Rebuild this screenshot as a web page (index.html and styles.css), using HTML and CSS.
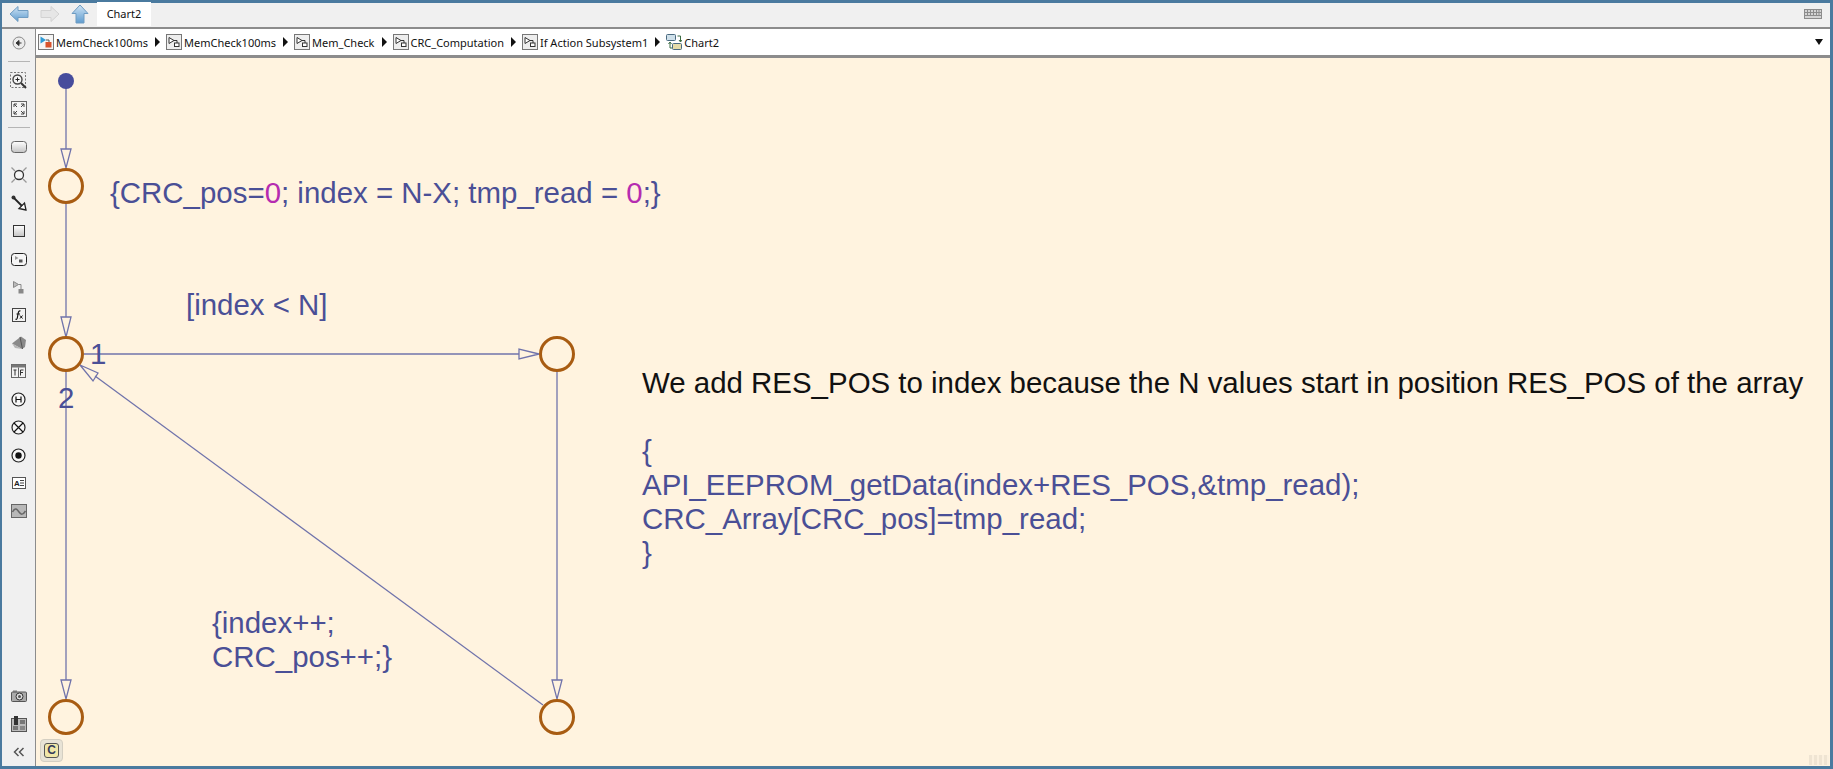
FILE: index.html
```html
<!DOCTYPE html>
<html lang="en">

<head>
  <meta charset="UTF-8">
  <meta name="viewport" content="width=device-width, initial-scale=1.0">
  <title>Chart2</title>
  <link rel="stylesheet" href="styles.css">
</head>

<body>
  <svg class="defs" width="0" height="0">
    <defs>
      <linearGradient id="navblue" x1="0" y1="0" x2="0" y2="1">
        <stop offset="0" stop-color="#cfe4f5"/>
        <stop offset="1" stop-color="#5f9ccf"/>
      </linearGradient>
      <linearGradient id="boxgrey" x1="0" y1="0" x2="0" y2="1">
        <stop offset="0" stop-color="#ffffff"/>
        <stop offset="1" stop-color="#c4c4c4"/>
      </linearGradient>
      <symbol id="subsystem" viewBox="0 0 16 16">
        <rect x="0.5" y="0.5" width="15" height="15" fill="#eeeeee" stroke="#777"/>
        <path d="M3 3.5 L8 6.5 L3 9.5 Z" fill="#fff" stroke="#333"/>
        <path d="M8 6.5 H11 V9" fill="none" stroke="#333"/>
        <rect x="8.5" y="9" width="4.5" height="3.5" fill="#fff" stroke="#333"/>
      </symbol>
    </defs>
  </svg>

  <div class="window">
    <div class="tabbar">
      <div class="nav">
        <svg class="nav-icon" width="20" height="18" viewBox="0 0 20 18"><path d="M1 9 L9 1.5 V5.5 H19 V12.5 H9 V16.5 Z" fill="url(#navblue)" stroke="#6f9cc2"/></svg>
        <svg class="nav-icon" width="20" height="18" viewBox="0 0 20 18"><path d="M19 9 L11 1.5 V5.5 H1 V12.5 H11 V16.5 Z" fill="#e6e6e6" stroke="#d2d2d2"/></svg>
        <svg class="nav-icon" width="18" height="20" viewBox="0 0 18 20"><path d="M9 1 L17 9.5 H13 V19 H5 V9.5 H1 Z" fill="url(#navblue)" stroke="#6f9cc2"/></svg>
      </div>
      <div class="tab">Chart2</div>
      <svg class="keyboard" width="18" height="10" viewBox="0 0 18 10"><rect x="0.5" y="0.5" width="17" height="9" fill="#d4d4d4" stroke="#8c8c8c"/><path d="M3.5 1V6.5M6.5 1V6.5M9.5 1V6.5M12.5 1V6.5M15 1V6.5M1 3.5H17M1 6.5H17" stroke="#8c8c8c"/></svg>
    </div>

    <div class="main">
      <div class="toolbar">
        <div class="tool"><svg width="16" height="16" viewBox="0 0 16 16"><circle cx="8" cy="8" r="6" fill="#ececec" stroke="#888"/><path d="M10.5 8H6M8 5.5L5 8L8 10.5Z" fill="#333" stroke="#333"/></svg></div>
        <hr class="tool-sep">
        <div class="tool"><svg width="18" height="18" viewBox="0 0 18 18"><rect x="0.5" y="0.5" width="15" height="15" fill="none" stroke="#777" stroke-dasharray="2 1.5"/><circle cx="7.5" cy="7.5" r="4.5" fill="#f6f6f6" stroke="#444" stroke-width="1.4"/><path d="M5.5 7.5H9.5M7.5 5.5V9.5" stroke="#222"/><path d="M11 11L16 16" stroke="#333" stroke-width="2"/></svg></div>
        <div class="tool"><svg width="16" height="16" viewBox="0 0 16 16"><rect x="0.5" y="0.5" width="15" height="15" fill="#f4f4f4" stroke="#666"/><path d="M3 6V3H6M13 6V3H10M3 10V13H6M13 10V13H10M3 3L6 6M13 3L10 6M3 13L6 10M13 13L10 10" fill="none" stroke="#444"/></svg></div>
        <hr class="tool-sep">
        <div class="tool"><svg width="16" height="12" viewBox="0 0 16 12"><rect x="0.5" y="0.5" width="15" height="11" rx="3" fill="url(#boxgrey)" stroke="#666"/></svg></div>
        <div class="tool"><svg width="16" height="16" viewBox="0 0 16 16"><circle cx="8" cy="8" r="4.5" fill="#f6f6f6" stroke="#333" stroke-width="1.3"/><path d="M0.5 0.5L4 4M15.5 0.5L12 4M0.5 15.5L4 12M15.5 15.5L12 12" stroke="#999" stroke-width="1.3"/></svg></div>
        <div class="tool"><svg width="16" height="16" viewBox="0 0 16 16"><circle cx="2.5" cy="2.5" r="2" fill="#333"/><path d="M3 3L11 11" stroke="#222" stroke-width="1.8"/><path d="M15 15L8 13.5L13.5 8Z" fill="#fff" stroke="#222" stroke-width="1.3"/></svg></div>
        <div class="tool"><svg width="12" height="12" viewBox="0 0 12 12"><rect x="0.5" y="0.5" width="11" height="11" fill="url(#boxgrey)" stroke="#333"/></svg></div>
        <div class="tool"><svg width="16" height="13" viewBox="0 0 16 13"><rect x="0.5" y="0.5" width="15" height="12" rx="3" fill="#f6f6f6" stroke="#222"/><path d="M4 3L7.5 5L4 7Z" fill="#999"/><rect x="8" y="6.5" width="3.5" height="3" fill="#555"/></svg></div>
        <div class="tool"><svg width="11" height="13" viewBox="0 0 11 13"><path d="M0.5 0.5L5.5 3.5L0.5 6.5Z" fill="#bbb" stroke="#888"/><path d="M5.5 3.5H8V8" fill="none" stroke="#888"/><rect x="5.5" y="8" width="5" height="4.5" fill="#888"/></svg></div>
        <div class="tool"><svg width="14" height="14" viewBox="0 0 14 14"><rect x="0.5" y="0.5" width="13" height="13" fill="#f2f2f2" stroke="#444"/><path d="M8.5 3C7 2.5 6.500 3.500 6 6L5.300 10C5 11.500 4.300 11.500 3.500 11M4.500 6H8" fill="none" stroke="#111" stroke-width="1.200"/><path d="M8 7.500L10.500 10.500M10.500 7.500L8 10.500" stroke="#111"/></svg></div>
        <div class="tool"><svg width="16" height="16" viewBox="0 0 16 16"><path d="M1 8.500L10 1.500L15 5L14 12L11 14Z" fill="#8a8a8a"/><path d="M9 2L11.500 14" stroke="#555"/><path d="M1 8.500L4 13L11 14" fill="#b5b5b5"/></svg></div>
        <div class="tool"><svg width="15" height="14" viewBox="0 0 15 14"><rect x="0.500" y="0.500" width="14" height="13" fill="#f2f2f2" stroke="#666"/><rect x="0.500" y="0.500" width="14" height="3" fill="#777"/><path d="M7.500 3.500V13.500" stroke="#666"/><path d="M2.500 6H5.500M4 6V11.500M9.500 6H12.500M9.500 6V11.500M9.500 8.500H12" stroke="#333" fill="none"/></svg></div>
        <div class="tool"><svg width="15" height="15" viewBox="0 0 15 15"><circle cx="7.500" cy="7.500" r="6.500" fill="#f6f6f6" stroke="#222" stroke-width="1.200"/><path d="M5 4.500V10.500M10 4.500V10.500M5 7.500H10" stroke="#111" stroke-width="1.200"/></svg></div>
        <div class="tool"><svg width="15" height="15" viewBox="0 0 15 15"><circle cx="7.500" cy="7.500" r="6.500" fill="#f6f6f6" stroke="#222" stroke-width="1.200"/><path d="M3 3L12 12M12 3L3 12" stroke="#111" stroke-width="1.200"/></svg></div>
        <div class="tool"><svg width="15" height="15" viewBox="0 0 15 15"><circle cx="7.500" cy="7.500" r="6.500" fill="#f6f6f6" stroke="#222" stroke-width="1.200"/><circle cx="7.500" cy="7.500" r="3.200" fill="#111"/></svg></div>
        <div class="tool"><svg width="14" height="12" viewBox="0 0 14 12"><rect x="0.500" y="0.500" width="13" height="11" fill="#fff" stroke="#555"/><text class="tool-letter" x="2" y="8.500">A</text><path d="M8 3.500H12M8 6H12M8 8.500H12" stroke="#444"/></svg></div>
        <div class="tool"><svg width="16" height="14" viewBox="0 0 16 14"><rect x="0.500" y="0.500" width="15" height="13" fill="#b8b8b8" stroke="#666"/><path d="M1.500 8C4 3 6 5 8 8S12 11 14.500 7" fill="none" stroke="#666" stroke-width="1.500"/></svg></div>
        <div class="tool-spacer"></div>
        <div class="tool"><svg width="16" height="12" viewBox="0 0 16 12"><rect x="0.500" y="2" width="15" height="9.500" rx="1" fill="#aaa" stroke="#555"/><rect x="2" y="0.500" width="4" height="2" fill="#777"/><circle cx="8.500" cy="6.500" r="3.500" fill="#ddd" stroke="#333"/><circle cx="8.500" cy="6.500" r="1.500" fill="#555"/></svg></div>
        <div class="tool"><svg width="16" height="16" viewBox="0 0 16 16"><rect x="0.500" y="2.500" width="15" height="13" fill="#bbb" stroke="#555"/><rect x="3" y="0" width="4" height="9" fill="#333"/><rect x="9" y="4" width="5" height="4" fill="#777"/><rect x="2" y="10" width="5" height="4" fill="#777"/><rect x="9" y="10" width="5" height="4" fill="#888"/></svg></div>
        <div class="tool"><svg width="12" height="10" viewBox="0 0 12 10"><path d="M5.500 1L1.500 5L5.500 9M10.500 1L6.500 5L10.500 9" fill="none" stroke="#555" stroke-width="1.500"/></svg></div>
      </div>

      <div class="content">
        <div class="addressbar">
          <div class="crumb">
            <svg class="crumb-icon" width="16" height="16" viewBox="0 0 16 16"><rect x="0.5" y="0.5" width="15" height="15" fill="#f6f6f6" stroke="#777"/><path d="M2.5 2.5 L8 6 L2.5 9.5 Z" fill="#2e9bd6"/><path d="M8 6 H11 V8" fill="none" stroke="#555"/><rect x="7.5" y="8" width="6" height="5.5" fill="#d9532c"/></svg>
            <span>MemCheck100ms</span><i class="sep"></i>
          </div>
          <div class="crumb">
            <svg class="crumb-icon" width="16" height="16"><use href="#subsystem"/></svg>
            <span>MemCheck100ms</span><i class="sep"></i>
          </div>
          <div class="crumb">
            <svg class="crumb-icon" width="16" height="16"><use href="#subsystem"/></svg>
            <span>Mem_Check</span><i class="sep"></i>
          </div>
          <div class="crumb">
            <svg class="crumb-icon" width="16" height="16"><use href="#subsystem"/></svg>
            <span>CRC_Computation</span><i class="sep"></i>
          </div>
          <div class="crumb">
            <svg class="crumb-icon" width="16" height="16"><use href="#subsystem"/></svg>
            <span>If Action Subsystem1</span><i class="sep"></i>
          </div>
          <div class="crumb">
            <svg class="crumb-icon" width="16" height="16" viewBox="0 0 16 16"><rect x="0.5" y="0.5" width="9" height="6" rx="1" fill="#cfe0ea" stroke="#4a6a80"/><rect x="6.5" y="9.5" width="9" height="6" rx="1" fill="#e6dca8" stroke="#4a6a80"/><path d="M11.5 2 H14.5 V7.5 M13 6 L14.5 8 L16 6 M4 14 V8.5 M2.5 10 L4 8 L5.5 10 M4 14 H6" fill="none" stroke="#3a6a40"/></svg>
            <span>Chart2</span>
          </div>
          <i class="dropdown"></i>
        </div>

        <div class="canvas">
          <!-- chart lines, coordinates are window coordinates -->
          <svg class="chart" width="1795" height="708" viewBox="36 58 1795 708">
            <g class="trans">
              <path d="M66 81V149"/>
              <path d="M66 203V317"/>
              <path d="M66 372V680"/>
              <path d="M84 354H519"/>
              <path d="M557 372V680"/>
              <path d="M543 705L95 376"/>
              <path d="M61 149H71L66 168Z"/>
              <path d="M61 317H71L66 337Z"/>
              <path d="M61 680H71L66 699Z"/>
              <path d="M552 680H562L557 699Z"/>
              <path d="M519 349V359L539 354Z"/>
              <path d="M80 365L98 373L93 381Z"/>
            </g>
            <circle class="default" cx="66" cy="81" r="8"/>
            <g class="junction">
              <circle cx="66" cy="186" r="16.500"/>
              <circle cx="66" cy="354" r="16.500"/>
              <circle cx="66" cy="717" r="16.500"/>
              <circle cx="557" cy="354" r="16.500"/>
              <circle cx="557" cy="717" r="16.500"/>
            </g>
          </svg>

          <div class="label label-init">{CRC_pos=<b>0</b>; index = N-X; tmp_read = <b>0</b>;}</div>
          <div class="label label-cond">[index &lt; N]</div>
          <div class="label label-one">1</div>
          <div class="label label-two">2</div>
          <div class="label label-inc">{index++;<br>CRC_pos++;}</div>
          <div class="label label-note">
            <span class="note-black">We add RES_POS to index because the N values start in position RES_POS of the array</span><br>
            <br>
            {<br>
            API_EEPROM_getData(index+RES_POS,&amp;tmp_read);<br>
            CRC_Array[CRC_pos]=tmp_read;<br>
            }
          </div>

          <div class="c-button"><span>C</span></div>
          <div class="scrollmark"></div>
        </div>
      </div>
    </div>
  </div>
</body>

</html>
```
FILE: styles.css
```css
* {
  box-sizing: border-box;
}

html,
body {
  margin: 0;
  height: 100%;
  overflow: hidden;
}

.defs {
  position: absolute;
}

.window {
  width: 1833px;
  height: 769px;
  border: solid #4a7a9f;
  border-width: 3px 3px 3px 2px;
  display: flex;
  flex-direction: column;
  background: #f0f0f0;
  font-family: "Noto Sans", "Open Sans", sans-serif;
  color: #111;
}

/* top row with the nav arrows and the tab */
.tabbar {
  height: 26px;
  flex: none;
  display: flex;
  align-items: center;
  padding: 0 8px 2px 7px;
  background: #f0f0f0;
  border-bottom: 2px solid #8c8c8c;
}

.nav {
  display: flex;
  align-items: center;
  gap: 11px;
  width: 88px;
}

.tab {
  width: 54px;
  height: 24px;
  background: #fff;
  font-size: 11px;
  line-height: 24px;
  text-align: center;
}

.keyboard {
  margin-left: auto;
}

.main {
  flex: 1;
  display: flex;
  min-height: 0;
}

.toolbar {
  width: 34px;
  flex: none;
  display: flex;
  flex-direction: column;
  align-items: center;
  background: #f0f0f0;
  border-right: 1px solid #8c8c8c;
}

.tool {
  width: 28px;
  height: 28px;
  flex: none;
  display: flex;
  align-items: center;
  justify-content: center;
}

.tool-sep {
  width: 22px;
  flex: none;
  margin: 4px 0 5px;
  border: 0;
  border-top: 1px solid #b5b5b5;
}

.tool-letter {
  font: bold 8px "Liberation Sans", sans-serif;
  fill: #222;
}

.tool-spacer {
  flex: 1;
}

.content {
  flex: 1;
  display: flex;
  flex-direction: column;
  min-width: 0;
}

.addressbar {
  height: 29px;
  flex: none;
  display: flex;
  align-items: center;
  gap: 6px;
  padding: 0 7px 0 2px;
  background: #fff;
  border-bottom: 3px solid #8c8c8c;
  font-size: 11px;
}

.crumb {
  display: flex;
  align-items: center;
}

.crumb span {
  margin-left: 2px;
  white-space: nowrap;
}

.sep {
  width: 0;
  height: 0;
  margin-left: 7px;
  border-left: 5px solid #111;
  border-top: 5px solid transparent;
  border-bottom: 5px solid transparent;
}

.dropdown {
  margin-left: auto;
  width: 0;
  height: 0;
  border-top: 6px solid #111;
  border-left: 4.5px solid transparent;
  border-right: 4.5px solid transparent;
}

/* stateflow canvas */
.canvas {
  flex: 1;
  position: relative;
  overflow: hidden;
  background: #fff3df;
}

.chart {
  position: absolute;
  left: 0;
  top: 0;
}

.trans path {
  fill: none;
  stroke: #7073ab;
  stroke-width: 1.3;
}

.default {
  fill: #474c9c;
}

.junction circle {
  fill: none;
  stroke: #a85c12;
  stroke-width: 3;
}

.label {
  position: absolute;
  font-family: "Liberation Sans", Arial, sans-serif;
  font-size: 29.45px;
  line-height: 34px;
  color: #4a4f96;
  white-space: nowrap;
}

.label b {
  font-weight: normal;
  color: #b52cb0;
}

.label-init {
  left: 74px;
  top: 118px;
}

.label-cond {
  left: 150px;
  top: 230px;
}

.label-one {
  left: 54px;
  top: 279px;
}

.label-two {
  left: 22px;
  top: 323px;
}

.label-inc {
  left: 176px;
  top: 548px;
}

.label-note {
  left: 606px;
  top: 308px;
}

.note-black {
  color: #111;
}

.c-button {
  position: absolute;
  left: 4px;
  bottom: 4px;
  width: 23px;
  height: 23px;
  display: flex;
  align-items: center;
  justify-content: center;
  background: #e8e3d6;
  border: 1px solid #d4cfc2;
  border-radius: 4px;
}

.c-button span {
  width: 15px;
  height: 15px;
  background: #f0e6a8;
  border: 1px solid #555;
  border-radius: 3px;
  font: bold 12px/13px "Liberation Sans", sans-serif;
  color: #333a5a;
  text-align: center;
}

.scrollmark {
  position: absolute;
  right: 1px;
  bottom: 1px;
  width: 20px;
  height: 10px;
  background: repeating-linear-gradient(90deg, #efe4d2 0 3px, #fbf0de 3px 5px);
}
```
